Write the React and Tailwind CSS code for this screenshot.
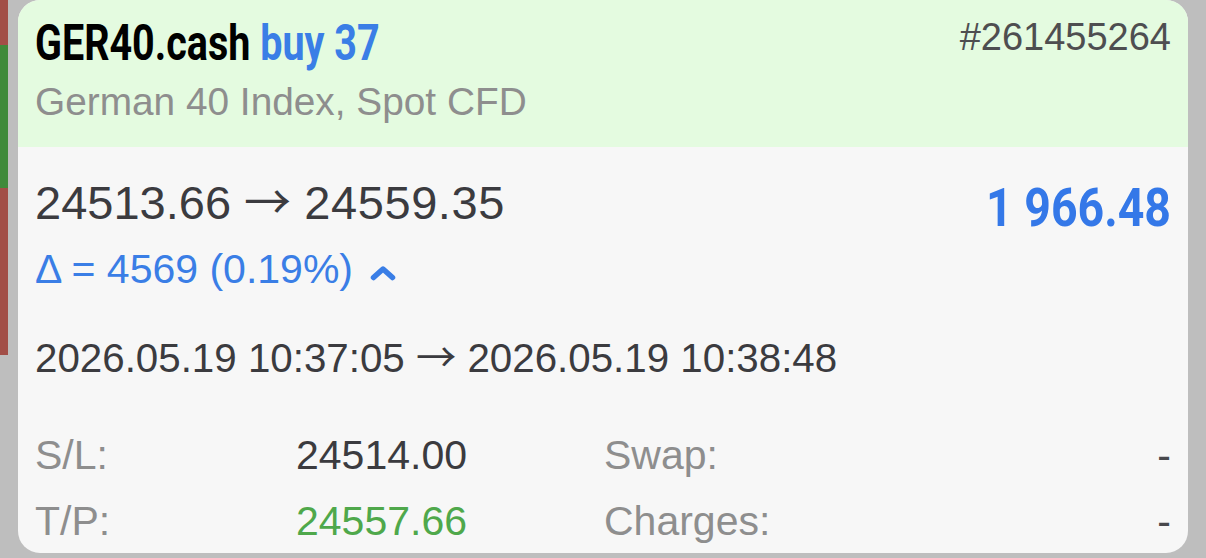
import { useState } from 'react'

const sans = "font-['Liberation_Sans',Arial,sans-serif]"
const cond = "font-['Roboto',sans-serif]"

function Arrow({ className = '' }) {
  return <span className={`font-['Noto_Sans_CJK_SC',sans-serif] leading-[0] ${className}`}>→</span>
}

function ChevronUp() {
  return (
    <svg width="26" height="16" viewBox="0 0 26 16" className="ml-[17px] mt-[16px]">
      <polyline points="3.5,12.5 13,4 22.5,12.5" fill="none" stroke="#3a7ee6" strokeWidth="5.5" strokeLinecap="round" strokeLinejoin="round" />
    </svg>
  )
}

function InfoRow({ label, value, valueColor, label2, value2, className = '' }) {
  return (
    <div className={`grid grid-cols-[261px_308px_1fr_auto] text-[41px] leading-none ${className}`}>
      <span className="text-[#8e8e8e]">{label}</span>
      <span className={valueColor}>{value}</span>
      <span className="text-[#8e8e8e]">{label2}</span>
      <span className="text-[#48484c] text-right">{value2}</span>
    </div>
  )
}

export default function App() {
  const [trade] = useState({
    symbol: 'GER40.cash',
    side: 'buy 37',
    ticket: '#261455264',
    description: 'German 40 Index, Spot CFD',
    open: '24513.66',
    close: '24559.35',
    profit: '1 966.48',
    delta: 'Δ = 4569 (0.19%)',
    openTime: '2026.05.19 10:37:05',
    closeTime: '2026.05.19 10:38:48',
    sl: '24514.00',
    tp: '24557.66',
  })

  return (
    <div className={`w-[1206px] h-[558px] bg-[#bebebe] flex items-start overflow-hidden ${sans}`}>
      {/* Strip of the list behind */}
      <div className="w-[8px] flex flex-col shrink-0">
        <div className="h-[45px] bg-[#a24e47]" />
        <div className="h-[143px] bg-[#3f8a3a]" />
        <div className="h-[167px] bg-[#a24e47]" />
      </div>

      {/* Card */}
      <div className="ml-[10px] w-[1170px] h-[553px] rounded-[22px] overflow-hidden flex flex-col bg-[#f7f7f7] shrink-0">
        {/* Header */}
        <div className="bg-[#e4fbe0] h-[147px] px-[17px] pt-[18px] shrink-0">
          <div className="flex justify-between items-start">
            <div className={`inline-block whitespace-nowrap text-[50px] leading-none font-bold scale-x-[0.79] origin-left ${cond}`}>
              <span className="text-black">{trade.symbol}</span>{' '}
              <span className="text-[#3a7ee6]">{trade.side}</span>
            </div>
            <div className="text-[38px] leading-none text-[#4e4e50]">{trade.ticket}</div>
          </div>
          <div className="mt-[15px] text-[38.8px] leading-none text-[#8e8e8e]">{trade.description}</div>
        </div>

        {/* Body */}
        <div className="px-[17px] pt-[32px]">
          <div className="h-[47px] flex justify-between items-start">
            <div className="text-[47px] leading-none text-[#3b3b3f] whitespace-nowrap">
              {trade.open} <Arrow /> <span className="tracking-[0.6px]">{trade.close}</span>
            </div>
            <div className={`mt-[2px] text-[54px] leading-none font-bold text-[#3478e8] scale-x-[0.86] origin-right ${cond}`}>
              {trade.profit}
            </div>
          </div>

          <div className="mt-[23px] h-[40px] flex items-start text-[41px] leading-none text-[#3a7ee6]">
            <span>{trade.delta}</span>
            <ChevronUp />
          </div>

          <div className="mt-[50px] text-[40.3px] leading-none text-[#3b3b3f] whitespace-nowrap">
            {trade.openTime} <Arrow /> {trade.closeTime}
          </div>

          <InfoRow className="mt-[56px]" label="S/L:" value={trade.sl} valueColor="text-[#3b3b3f]" label2="Swap:" value2="-" />
          <InfoRow className="mt-[25px]" label="T/P:" value={trade.tp} valueColor="text-[#4fa84b]" label2="Charges:" value2="-" />
        </div>
      </div>
    </div>
  )
}
